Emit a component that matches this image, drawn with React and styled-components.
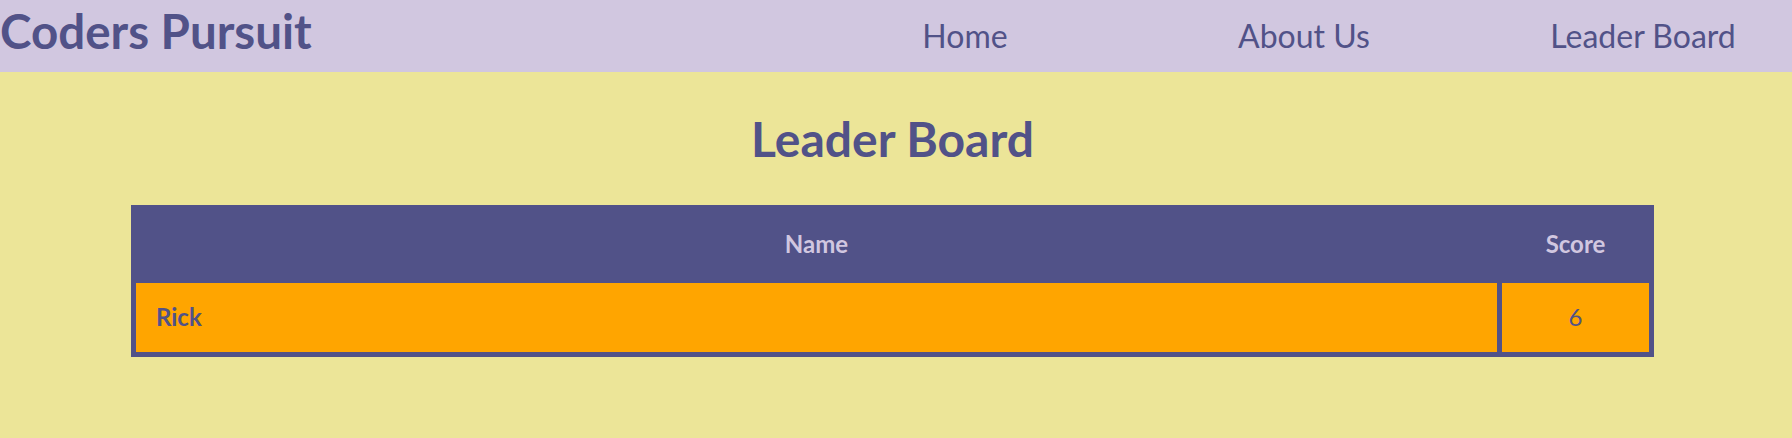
import React from "react";
import styled, { createGlobalStyle } from "styled-components";

const GlobalStyle = createGlobalStyle`
  html, body {
    margin: 0;
    padding: 0;
    background: #ece598;
    font-family: Lato, "Open Sans", sans-serif;
  }
`;

const players = [{ name: "Rick", score: 6 }];

const App = () => {
  return (
    <>
      <GlobalStyle />
      <NavBar>
        <Logo>Coders Pursuit</Logo>
        <NavList>
          <NavItem>Home</NavItem>
          <NavItem>About Us</NavItem>
          <NavItem>Leader Board</NavItem>
        </NavList>
      </NavBar>
      <Main>
        <Title>Leader Board</Title>
        <Table>
          <thead>
            <tr>
              <HeadCell>Name</HeadCell>
              <HeadCell>Score</HeadCell>
            </tr>
          </thead>
          <tbody>
            {players.map((p) => (
              <tr key={p.name}>
                <NameCell>{p.name}</NameCell>
                <ScoreCell>{p.score}</ScoreCell>
              </tr>
            ))}
          </tbody>
        </Table>
      </Main>
    </>
  );
};

export default App;

const NavBar = styled.nav`
  display: flex;
  align-items: center;
  height: 72px;
  background: #d1c7e0;
  color: #515288;
`;

const Logo = styled.h1`
  margin: 2px 0 0;
  align-self: flex-start;
  font-size: 47.5px;
  font-weight: 700;
  line-height: 1.2;
`;

const NavList = styled.ul`
  display: flex;
  gap: 39px;
  margin: 0 -1px 0 auto;
  padding: 0;
  list-style: none;
`;

const NavItem = styled.li`
  width: 300px;
  text-align: center;
  font-size: 32px;
  font-weight: 400;
  line-height: 1.2;
  cursor: pointer;
`;

const Main = styled.main`
  display: flex;
  flex-direction: column;
  align-items: center;
  padding: 0 7px 80px 0;
`;

const Title = styled.h2`
  margin: 38px 0 37px;
  font-size: 48px;
  font-weight: 700;
  line-height: 1.2;
  color: #515288;
`;

const Table = styled.table`
  width: 1523px;
  background: #515288;
  border-spacing: 5px;
  font-size: 24px;
`;

const HeadCell = styled.th`
  padding: 20px;
  color: #d1c7e0;
  font-weight: 700;
  text-align: center;
  line-height: 1.2;
  &:last-child {
    width: 107px;
  }
`;

const NameCell = styled.td`
  padding: 20px;
  background: #ffa500;
  color: #515288;
  font-weight: 700;
  text-align: left;
  line-height: 1.2;
`;

const ScoreCell = styled(NameCell)`
  font-weight: 400;
  text-align: center;
`;
